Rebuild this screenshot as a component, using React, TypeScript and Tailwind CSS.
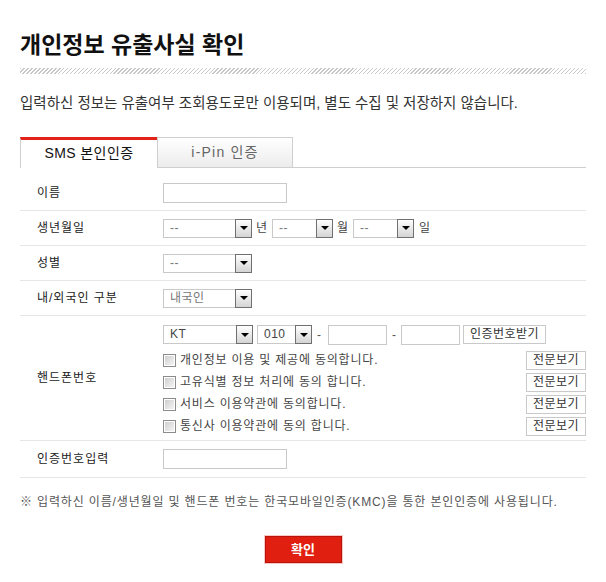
import type { ReactNode } from "react";

const FONT = "font-['Liberation_Sans','Noto_Sans_CJK_KR',sans-serif]";

type SelectProps = { value: string; width: string; muted?: boolean };

const FakeSelect = ({ value, width, muted = true }: SelectProps) => (
  <div className={`flex h-[19px] items-stretch border border-[#c9c9c9] bg-white ${width}`}>
    <span
      className={`flex-1 truncate pl-[6px] text-[12px] leading-[17px] tracking-[0.5px] ${muted ? "text-[#777]" : "text-[#444]"}`}
    >
      {value}
    </span>
    <span className="-my-px -mr-px flex w-[17px] items-center justify-center border border-[#707070] bg-gradient-to-b from-white to-[#d4d4d4]">
      <span className="h-0 w-0 border-x-[4px] border-t-[4px] border-x-transparent border-t-black" />
    </span>
  </div>
);

const TextInput = ({ width }: { width: string }) => (
  <input type="text" className={`h-[20px] border border-[#c9c9c9] bg-white px-1 text-[12px] outline-none ${width}`} />
);

const SmallButton = ({ children, width }: { children: ReactNode; width: string }) => (
  <button
    type="button"
    className={`h-[19px] border border-[#c9c9c9] bg-white text-[12px] leading-[17px] tracking-[0.5px] text-[#333] ${width}`}
  >
    {children}
  </button>
);

const Checkbox = () => (
  <span className="flex h-[13px] w-[13px] border border-[#8c8c8c] bg-white p-px">
    <span className="h-full w-full bg-gradient-to-br from-[#cfcfcf] to-[#f4f4f4]" />
  </span>
);

const Row = ({ label, children }: { label: string; children: ReactNode }) => (
  <div className="flex items-center border-b border-[#e6e6e6]">
    <div className="w-[143px] shrink-0 pl-[17px] text-[12px] tracking-[1px] text-[#222]">{label}</div>
    <div className="flex flex-1 items-center">{children}</div>
  </div>
);

const agreements = [
  "개인정보 이용 및 제공에 동의합니다.",
  "고유식별 정보 처리에 동의 합니다.",
  "서비스 이용약관에 동의합니다.",
  "통신사 이용약관에 동의 합니다.",
];

export default function App() {
  return (
    <div className={`min-h-screen bg-white ${FONT}`}>
      <div className="w-[606px] px-[20px] pt-[29px]">
        <h1 className="text-[23px] font-bold leading-[32px] text-[#111]">개인정보 유출사실 확인</h1>
        <div className="mt-[7px] h-[6px] bg-[repeating-linear-gradient(135deg,#c8c8c8_0px,#c8c8c8_1px,transparent_1px,transparent_2.8px)]" />

        <p className="mt-[19px] text-[14.5px] leading-[20px] text-[#333]">
          입력하신 정보는 유출여부 조회용도로만 이용되며, 별도 수집 및 저장하지 않습니다.
        </p>

        <div className="mt-[24px] flex h-[31px]">
          <div className="flex w-[137px] items-center justify-center border-l border-t-[3px] border-l-[#cfcfcf] border-t-[#e2231a] pb-[1px] text-[14px] tracking-[0.4px] text-[#111]">
            SMS 본인인증
          </div>
          <div className="flex w-[136px] items-center justify-center border border-[#cfcfcf] bg-gradient-to-b from-white to-[#ececec] text-[14px] tracking-[1.2px] text-[#666]">
            i-Pin 인증
          </div>
          <div className="flex-1 border-b border-[#cfcfcf]" />
        </div>

        <div className="mt-[7px]">
          <Row label="이름">
            <div className="flex h-[35px] items-center">
              <TextInput width="w-[124px]" />
            </div>
          </Row>

          <Row label="생년월일">
            <div className="flex h-[34px] items-center text-[12px] text-[#444]">
              <FakeSelect value="--" width="w-[89px]" />
              <span className="ml-[4px] mr-[5px]">년</span>
              <FakeSelect value="--" width="w-[61px]" />
              <span className="ml-[4px] mr-[5px]">월</span>
              <FakeSelect value="--" width="w-[61px]" />
              <span className="ml-[5px]">일</span>
            </div>
          </Row>

          <Row label="성별">
            <div className="flex h-[34px] items-center">
              <FakeSelect value="--" width="w-[89px]" />
            </div>
          </Row>

          <Row label="내/외국인 구분">
            <div className="flex h-[34px] items-center">
              <FakeSelect value="내국인" width="w-[89px]" />
            </div>
          </Row>

          <Row label="핸드폰번호">
            <div className="flex w-full flex-col pb-[3px] pt-[8px]">
              <div className="flex h-[21px] items-center text-[12px] text-[#555]">
                <FakeSelect value="KT" width="w-[90px]" muted={false} />
                <div className="ml-[4px]">
                  <FakeSelect value="010" width="w-[55px]" muted={false} />
                </div>
                <span className="ml-[5px] mr-[7px]">-</span>
                <TextInput width="w-[59px]" />
                <span className="ml-[5px] mr-[5px]">-</span>
                <TextInput width="w-[59px]" />
                <div className="ml-[3px]">
                  <SmallButton width="w-[83px]">인증번호받기</SmallButton>
                </div>
              </div>
              <div className="mt-[4px] flex flex-col">
                {agreements.map((text) => (
                  <label key={text} className="flex h-[22px] items-center">
                    <Checkbox />
                    <span className="ml-[4px] flex-1 text-[12px] tracking-[0.8px] text-[#444]">{text}</span>
                    <SmallButton width="w-[60px]">전문보기</SmallButton>
                  </label>
                ))}
              </div>
            </div>
          </Row>

          <Row label="인증번호입력">
            <div className="flex h-[36px] items-center">
              <TextInput width="w-[124px]" />
            </div>
          </Row>
        </div>

        <p className="mt-[15px] text-[12px] leading-[18px] tracking-[0.85px] text-[#555]">
          ※ 입력하신 이름/생년월일 및 핸드폰 번호는 한국모바일인증(KMC)을 통한 본인인증에 사용됩니다.
        </p>

        <div className="mt-[25px] flex justify-center pb-[19px]">
          <button
            type="button"
            className="h-[27px] w-[77px] border border-[#b8140b] bg-[#e01f10] text-[13px] font-bold text-white outline outline-1 outline-[#f6c9c4]"
          >
            확인
          </button>
        </div>
      </div>
    </div>
  );
}
